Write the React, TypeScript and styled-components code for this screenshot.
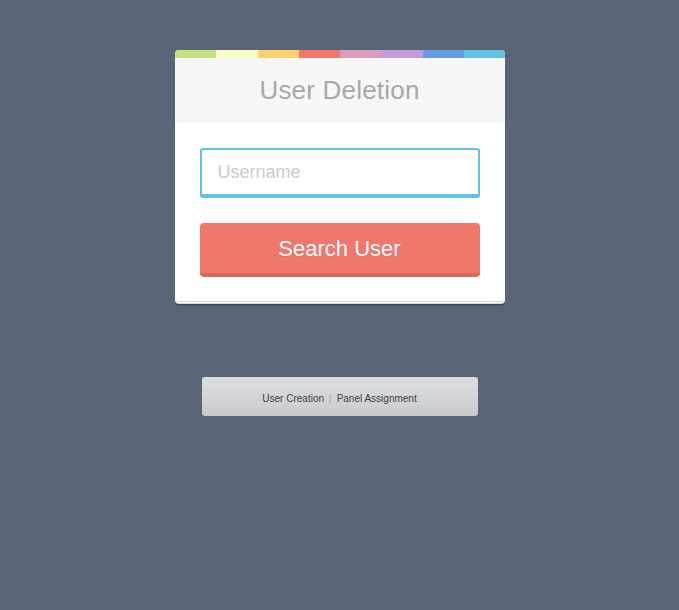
import React from "react";
import styled, { createGlobalStyle } from "styled-components";

const Global = createGlobalStyle`
  html, body {
    margin: 0;
    padding: 0;
    background: #5a6677;
    min-height: 100%;
  }
  body {
    font-family: "Liberation Sans", Arial, Helvetica, sans-serif;
  }
  * { box-sizing: border-box; }
`;

const Page = styled.div`
  min-height: 610px;
  padding-top: 50px;
  display: flex;
  flex-direction: column;
  align-items: center;
  gap: 76px;
`;

const Card = styled.div`
  width: 330px;
  background: #fff;
  border-radius: 4px;
  overflow: hidden;
  box-shadow:
    0 1px 0 #d6d6d6,
    0 2px 0 #fff,
    0 3px 0 #d6d6d6,
    0 4px 0 rgba(0, 0, 0, 0.22),
    0 5px 1px rgba(0, 0, 0, 0.12);
`;

const ColorBar = styled.div`
  height: 8px;
  background: linear-gradient(
    to right,
    #c4e17f 0, #c4e17f 12.5%,
    #f7fdca 12.5%, #f7fdca 25%,
    #fecf71 25%, #fecf71 37.5%,
    #f0776c 37.5%, #f0776c 50%,
    #db9dbe 50%, #db9dbe 62.5%,
    #c49cde 62.5%, #c49cde 75%,
    #669ae1 75%, #669ae1 87.5%,
    #62c2e4 87.5%, #62c2e4 100%
  );
`;

const Header = styled.div`
  height: 65px;
  background: #f7f7f7;
  display: flex;
  align-items: center;
  justify-content: center;
`;

const Title = styled.h1`
  margin: 0;
  font-size: 26px;
  font-weight: normal;
  color: #a8a8a8;
  letter-spacing: 0.2px;
`;

const Body = styled.form`
  padding: 25px 25px 24px;
  display: flex;
  flex-direction: column;
  gap: 25px;
`;

const Input = styled.input`
  width: 100%;
  height: 50px;
  border: 2px solid #62c2e4;
  border-bottom-width: 4px;
  border-radius: 3px;
  padding: 0 15px 0 16px;
  font-family: "Liberation Sans", Arial, sans-serif;
  font-size: 18px;
  color: #555;
  caret-color: #333;
  outline: none;
  background: #fff;
  &::placeholder {
    color: #cccccc;
  }
`;

const Button = styled.button`
  width: 100%;
  height: 54px;
  border: none;
  border-bottom: 4px solid #d9685f;
  border-radius: 4px;
  background: #f0776c;
  color: #fff;
  font-family: "Liberation Sans", Arial, sans-serif;
  font-size: 22px;
  padding: 2px 0 0;
  text-shadow: 0 1px 0 rgba(0, 0, 0, 0.08);
  cursor: pointer;
`;

const Footer = styled.nav`
  width: 276px;
  height: 39px;
  border-radius: 3px;
  background: linear-gradient(to bottom, #dcdee1 0%, #c9cbce 100%);
  display: flex;
  align-items: center;
  justify-content: center;
  padding-top: 3px;
  font-size: 10px;
  color: #3b3d48;
`;

const FooterLink = styled.a`
  color: #3b3d48;
  text-decoration: none;
`;

const Sep = styled.span`
  color: #c7a35f;
  margin: 0 5px;
`;

export default function App() {
  return (
    <>
      <Global />
      <Page>
        <Card>
          <ColorBar />
          <Header>
            <Title>User Deletion</Title>
          </Header>
          <Body onSubmit={(e) => e.preventDefault()}>
            <Input type="text" placeholder="Username" autoFocus />
            <Button type="submit">Search User</Button>
          </Body>
        </Card>
        <Footer>
          <FooterLink href="#">User Creation</FooterLink>
          <Sep>|</Sep>
          <FooterLink href="#">Panel Assignment</FooterLink>
        </Footer>
      </Page>
    </>
  );
}
